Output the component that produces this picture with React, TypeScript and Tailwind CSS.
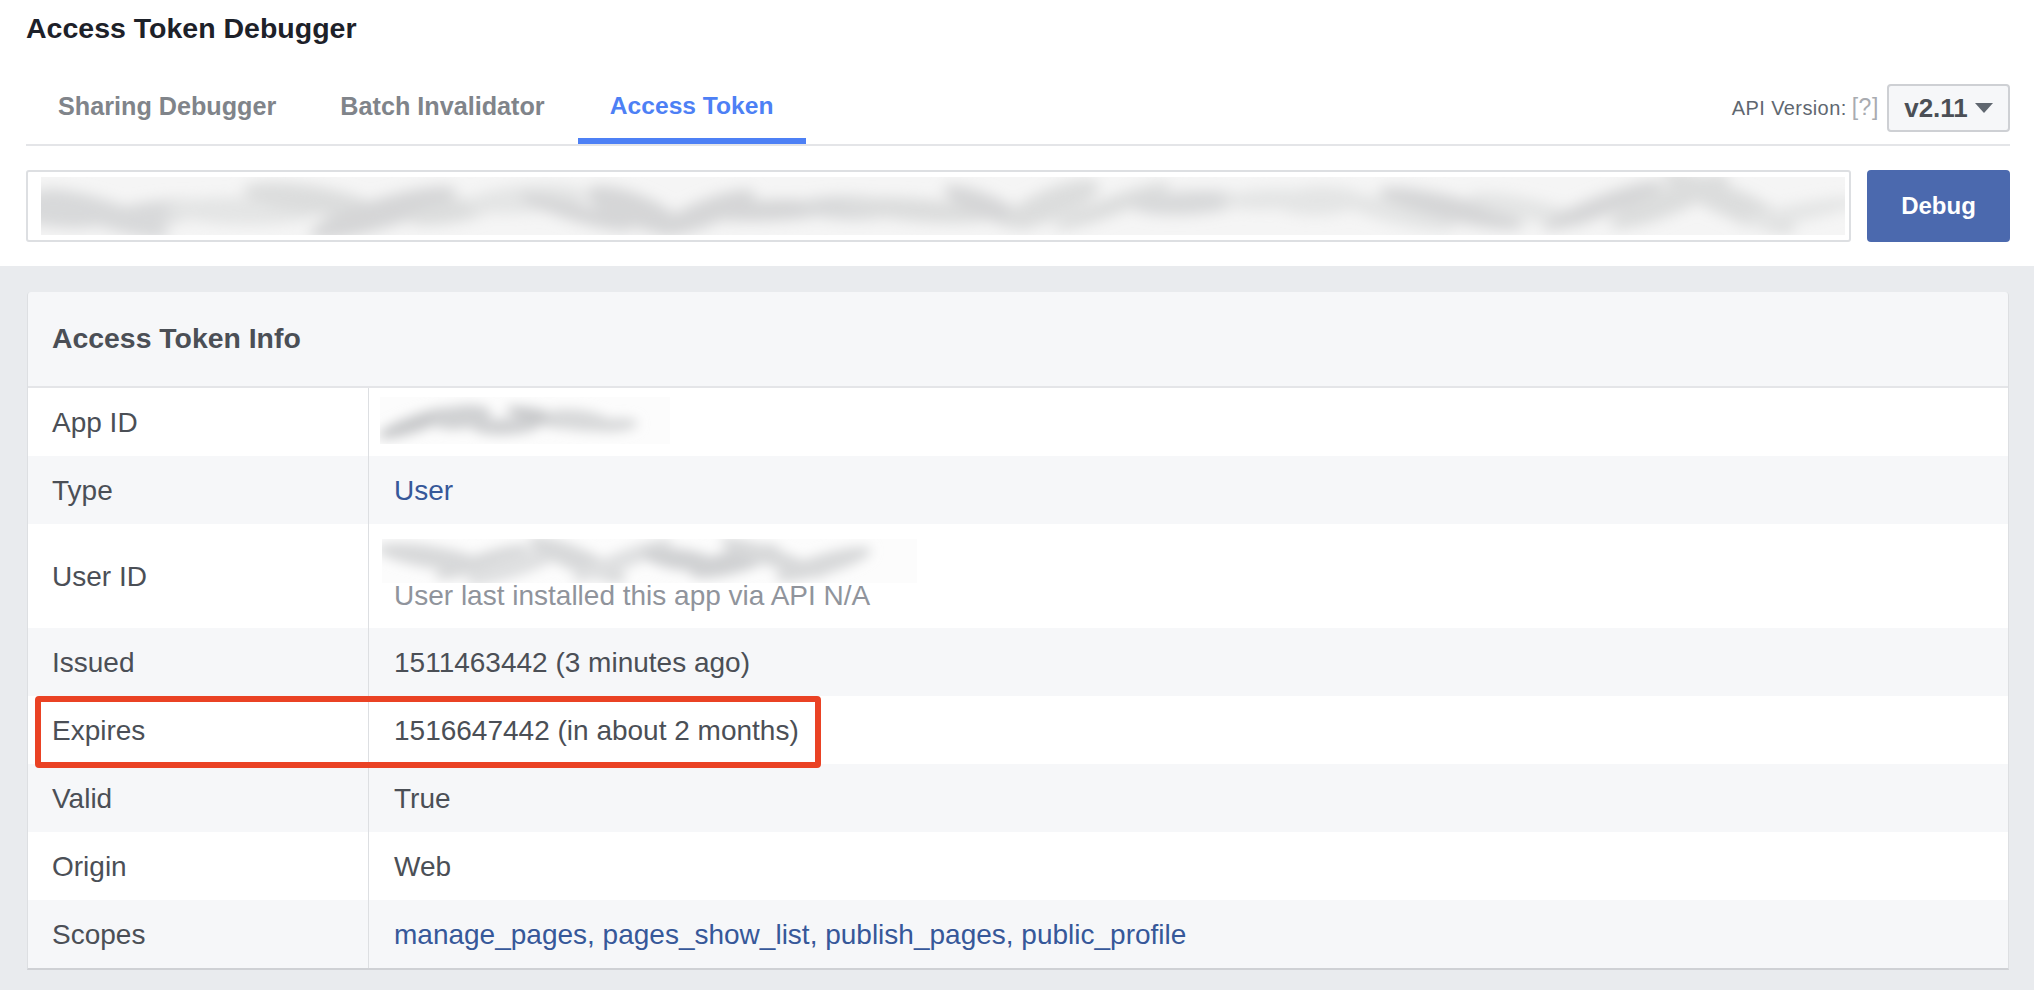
import React from "react";

function Smudge({ width, height, seed, dark, blur, base, step, inset }: { width: number; height: number; seed: number; dark: string[]; blur: number; base: string; step: number; inset: number }) {
  let s = seed;
  const rnd = () => {
    s = (s * 9301 + 49297) % 233280;
    return s / 233280;
  };
  const blobs: { x: number; y: number; rx: number; ry: number; a: number; c: string }[] = [];
  for (let x = inset; x < width - inset; x += step * (0.6 + rnd() * 0.5)) {
    blobs.push({
      x,
      y: height * (0.38 + rnd() * 0.26),
      rx: step * (0.55 + rnd() * 0.45),
      ry: height * (0.14 + rnd() * 0.14),
      a: -24 + rnd() * 48,
      c: dark[Math.floor(rnd() * dark.length)],
    });
  }
  const id = `sm${seed}`;
  return (
    <svg width={width} height={height} viewBox={`0 0 ${width} ${height}`} className="block shrink-0">
      <defs>
        <filter id={id} x="-5%" y="-50%" width="110%" height="200%">
          <feGaussianBlur stdDeviation={blur} />
        </filter>
      </defs>
      <rect width={width} height={height} fill={base} />
      <g filter={`url(#${id})`}>
        {blobs.map((b, i) => (
          <ellipse key={i} cx={b.x} cy={b.y} rx={b.rx} ry={b.ry} fill={b.c} transform={`rotate(${b.a} ${b.x} ${b.y})`} />
        ))}
      </g>
    </svg>
  );
}

function Row({ label, shaded, tall, children }: { label: string; shaded?: boolean; tall?: boolean; children: React.ReactNode }) {
  return (
    <div className={`relative flex text-[28px] leading-[32px] text-[#4b4f56] ${shaded ? "bg-[#f6f7f9]" : "bg-white"} ${tall ? "h-[104px]" : "h-[68px]"}`}>
      <div className="flex w-[341px] shrink-0 items-center border-r-[1px] border-[#dddfe2] pl-[24px] pt-[1px]">{label}</div>
      <div className="flex min-w-0 flex-1 flex-col justify-center pl-[25px] pt-[1px]">{children}</div>
    </div>
  );
}

export default function App() {
  return (
    <div className="min-h-[990px] bg-[#e9ebee] font-['Liberation_Sans',Arial,sans-serif]">
      <div className="h-[266px] bg-white pl-[26px] pr-[24px] pt-[12px]">
        <h1 className="text-[28.5px] font-bold leading-[32px] text-[#1d2129]">Access Token Debugger</h1>
        <div className="mt-[28px] box-content flex h-[72px] items-start border-b-2 border-[#e4e5e8]">
          <div className="flex h-[72px] items-center pb-[5px]">
            <span className="px-[32px] text-[25.2px] font-bold leading-[30px] text-[#80848a]">Sharing Debugger</span>
            <span className="px-[32px] text-[25.2px] font-bold leading-[30px] text-[#80848a]">Batch Invalidator</span>
          </div>
          <div className="ml-px flex h-[72px] w-[228px] items-center justify-center border-b-[6px] border-[#4d80f5] pt-px text-[24.6px] font-bold leading-[30px] text-[#4d80f5]">Access Token</div>
          <div className="ml-auto flex items-center pt-[12px]">
            <span className="text-[20px] leading-[24px] tracking-[0.4px] text-[#606770]">API Version:</span>
            <span className="ml-[5px] -mt-[3px] text-[23px] leading-[24px] tracking-[0.6px] text-[#a8abb0]">[?]</span>
            <div className="ml-[8px] flex h-[48px] w-[123px] items-center justify-center gap-[7px] rounded-[4px] border-2 border-[#ced0d4] bg-[#f6f7f9]">
              <span className="text-[26px] font-bold leading-none text-[#4b4f56]">v2.11</span>
              <span className="h-0 w-0 border-x-[9px] border-t-[10px] border-x-transparent border-t-[#606770]"></span>
            </div>
          </div>
        </div>
        <div className="mt-[24px] flex h-[72px] gap-[16px]">
          <div className="flex min-w-0 flex-1 items-center overflow-hidden rounded-[3px] border-2 border-[#dddfe2] bg-white pl-[13px] pr-[3px]">
            <div className="h-[58px] w-[1804px] overflow-hidden">
              <Smudge width={1804} height={58} seed={37} dark={["#d5d6d7", "#dcdddd", "#e4e5e5", "#d8d9da"]} blur={7} base="#f5f5f5" step={78} inset={0} />
            </div>
          </div>
          <button className="w-[143px] rounded-[4px] bg-[#4b69ae] text-[24px] font-bold text-white">Debug</button>
        </div>
      </div>
      <div className="pl-[27px] pr-[25px] pt-[26px]">
        <div className="overflow-hidden rounded-t-[4px] border-x border-b-2 border-x-[#dddfe2] border-b-[#cfd1d5]">
          <div className="flex h-[96px] items-center border-b-2 border-[#e4e5e8] bg-[#f6f7f9] pb-[2px] pl-[24px] text-[28.4px] font-bold text-[#4b4f56]">Access Token Info</div>
          <Row label="App ID">
            <div className="-ml-[14px] -mt-[5px]"><Smudge width={290} height={47} seed={11} dark={["#c8c9cb", "#d0d1d3", "#d8d9da"]} blur={6} base="#fcfcfc" step={44} inset={38} /></div>
          </Row>
          <Row label="Type" shaded>
            <span className="text-[#365899]">User</span>
          </Row>
          <Row label="User ID" tall>
            <div className="-ml-[12px] -mt-[3px]"><Smudge width={535} height={44} seed={23} dark={["#d0d1d3", "#d8d9da", "#dfe0e1"]} blur={6} base="#fcfcfc" step={58} inset={50} /></div>
            <span className="-mt-[2px] leading-[30px] text-[#90949c]">User last installed this app via API N/A</span>
          </Row>
          <Row label="Issued" shaded>1511463442 (3 minutes ago)</Row>
          <Row label="Expires">
            1516647442 (in about 2 months)
            <div className="absolute left-[7px] top-0 z-10 h-[72px] w-[786px] rounded-[4px] border-[6px] border-[#ea4224]"></div>
          </Row>
          <Row label="Valid" shaded>True</Row>
          <Row label="Origin">Web</Row>
          <Row label="Scopes" shaded>
            <span className="text-[#365899]">manage_pages, pages_show_list, publish_pages, public_profile</span>
          </Row>
        </div>
      </div>
    </div>
  );
}
